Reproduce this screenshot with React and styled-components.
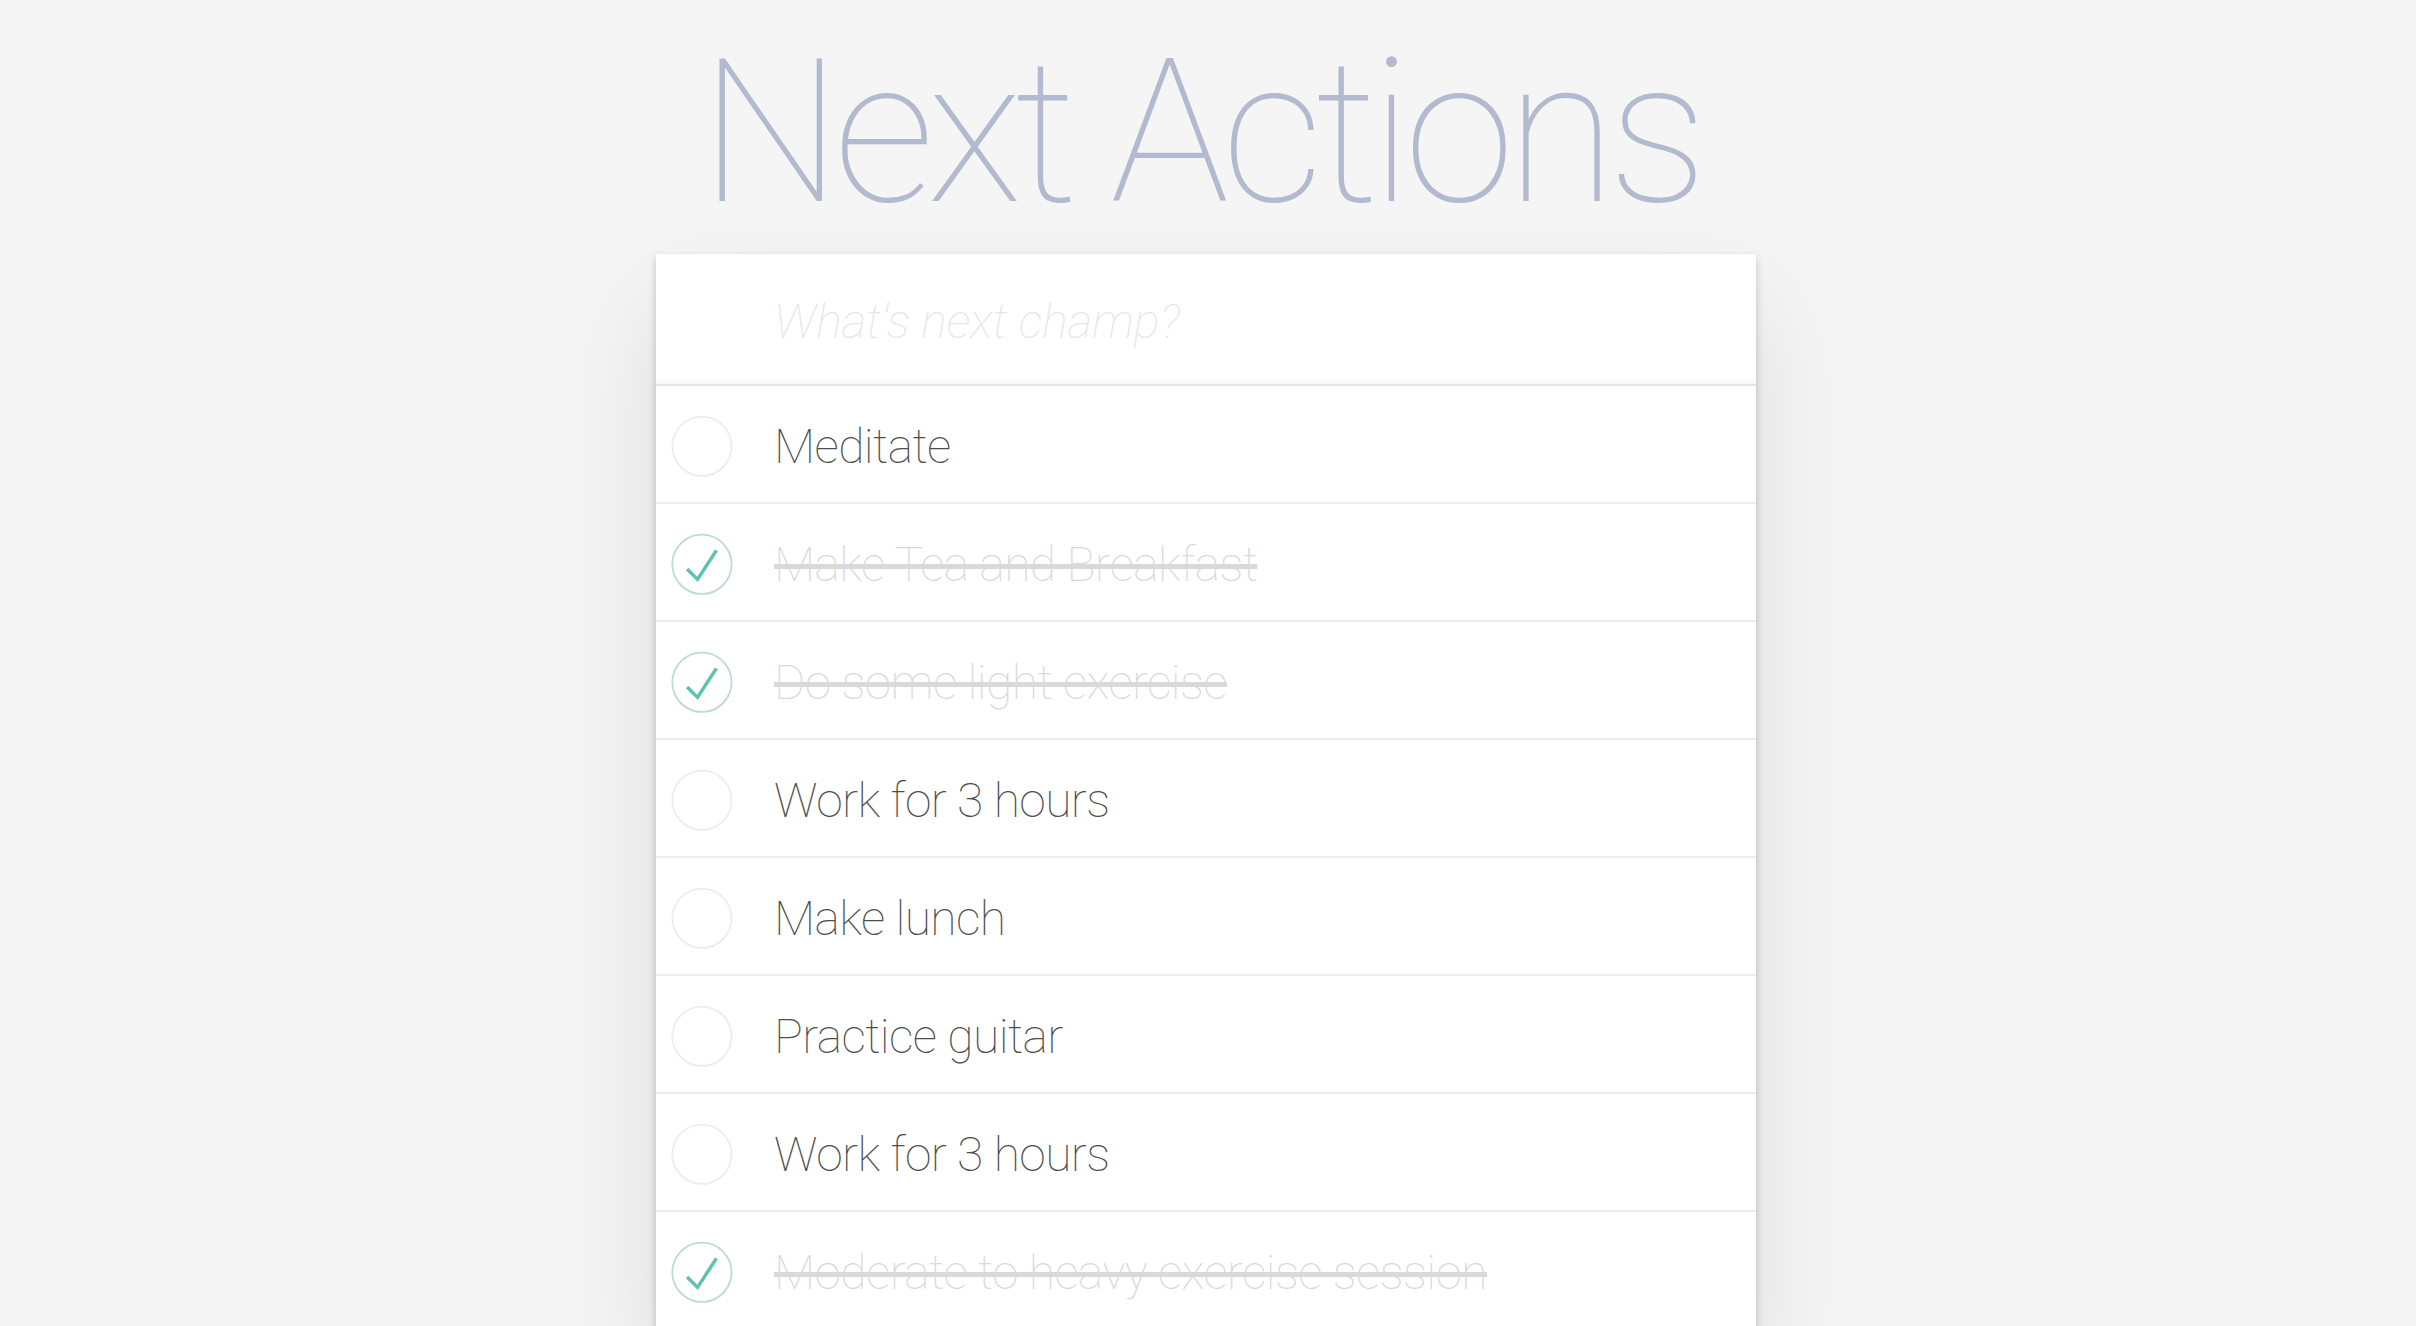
import React, { useState } from "react";
import styled, { createGlobalStyle } from "styled-components";

const GlobalStyle = createGlobalStyle`
  html, body {
    margin: 0;
    padding: 0;
  }
  body {
    background: #f5f5f5;
    font-family: Roboto, "Helvetica Neue", "Liberation Sans", sans-serif;
    font-weight: 300;
    color: #4d4d4d;
    -webkit-font-smoothing: antialiased;
  }
`;

const initialTodos = [
  { id: 1, title: "Meditate", done: false },
  { id: 2, title: "Make Tea and Breakfast", done: true },
  { id: 3, title: "Do some light exercise", done: true },
  { id: 4, title: "Work for 3 hours", done: false },
  { id: 5, title: "Make lunch", done: false },
  { id: 6, title: "Practice guitar", done: false },
  { id: 7, title: "Work for 3 hours", done: false },
  { id: 8, title: "Moderate to heavy exercise session", done: true },
];

const Toggle = ({ done }) => (
  <svg width="80" height="80" viewBox="-10 -18 100 135">
    <circle
      cx="50"
      cy="50"
      r="50"
      fill="none"
      stroke={done ? "#bddad5" : "#ededed"}
      strokeWidth="3"
    />
    {done && <path fill="#5dc2af" d="M72 25L42 71 27 56l-4 4 20 20 34-52z" />}
  </svg>
);

const App = () => {
  const [todos, setTodos] = useState(initialTodos);
  const [text, setText] = useState("");

  const toggle = (id) =>
    setTodos(todos.map((t) => (t.id === id ? { ...t, done: !t.done } : t)));

  const addTodo = (e) => {
    if (e.key !== "Enter" || !text.trim()) return;
    setTodos([...todos, { id: Date.now(), title: text.trim(), done: false }]);
    setText("");
  };

  return (
    <Wrapper>
      <GlobalStyle />
      <Title>Next Actions</Title>
      <Card>
        <NewTodo
          placeholder="What's next champ?"
          value={text}
          onChange={(e) => setText(e.target.value)}
          onKeyDown={addTodo}
        />
        <List>
          {todos.map((todo) => (
            <Item key={todo.id} onClick={() => toggle(todo.id)}>
              <ToggleBox>
                <Toggle done={todo.done} />
              </ToggleBox>
              <Label done={todo.done}>{todo.title}</Label>
            </Item>
          ))}
        </List>
      </Card>
    </Wrapper>
  );
};

const Wrapper = styled.main`
  min-height: 100vh;
  padding-right: 4px;
  display: flex;
  flex-direction: column;
  align-items: center;
`;

const Title = styled.h1`
  margin: 0;
  padding: 13px 12px 0 0;
  height: 241px;
  font-size: 200px;
  line-height: 240px;
  font-weight: 100;
  color: #b3b9cf;
  text-align: center;
  letter-spacing: -7.8px;
`;

const Card = styled.section`
  width: 1100px;
  background: #fff;
  box-shadow: 0 4px 8px 0 rgba(0, 0, 0, 0.2),
    0 50px 100px 0 rgba(0, 0, 0, 0.1);
`;

const NewTodo = styled.input`
  display: block;
  width: 100%;
  box-sizing: border-box;
  margin: 0;
  height: 130px;
  padding: 34px 32px 30px 118px;
  border: none;
  outline: none;
  background: transparent;
  font-family: inherit;
  font-size: 48px;
  font-weight: 100;
  color: #4d4d4d;
  box-shadow: inset 0 -4px 2px rgba(0, 0, 0, 0.03);

  &::placeholder {
    font-style: italic;
    font-weight: 100;
    color: #e6e6e6;
  }
`;

const List = styled.ul`
  margin: 0;
  padding: 0;
  list-style: none;
  border-top: 2px solid #e6e6e6;
`;

const Item = styled.li`
  display: flex;
  align-items: center;
  box-sizing: border-box;
  height: 118px;
  padding-top: 4px;
  border-bottom: 2px solid #ededed;
  cursor: pointer;
`;

const ToggleBox = styled.span`
  display: flex;
  width: 118px;
  flex-shrink: 0;
`;

const Label = styled.span`
  padding-top: 2px;
  font-size: 48px;
  line-height: 1.2;
  font-weight: 100;
  letter-spacing: -0.6px;
  color: ${({ done }) => (done ? "#d9d9d9" : "#4d4d4d")};
  text-decoration: ${({ done }) => (done ? "line-through" : "none")};
  text-decoration-thickness: 5px;
  text-decoration-color: #d9d9d9;
  white-space: nowrap;
`;

export default App;
